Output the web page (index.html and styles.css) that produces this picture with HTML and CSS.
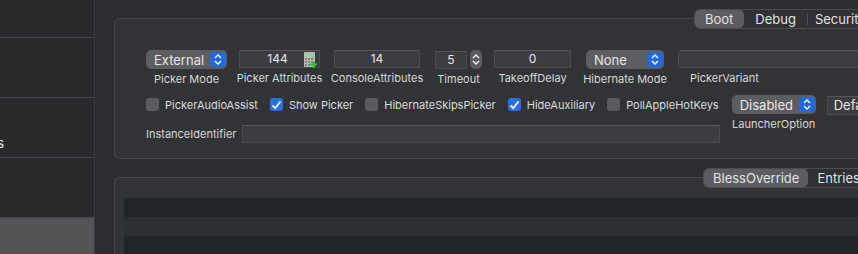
FILE: index.html
```html
<!DOCTYPE html>
<html lang="en">
  <head>
    <title>Misc - Boot</title>
    <link rel="stylesheet" href="styles.css">
  </head>
  <body>
    <div class="sidebar">
      <div class="side-row first"></div>
      <div class="side-row"></div>
      <div class="side-row"><span class="side-label">DeviceProperties</span></div>
      <div class="side-row"></div>
      <div class="side-row selected"></div>
    </div>

    <div class="main">
      <!-- Boot group -->
      <div class="group">
        <div class="tabs tabs-boot">
          <span class="tab active">Boot</span>
          <span class="tab">Debug</span>
          <span class="tab sep">Security</span>
        </div>

        <div class="row1">
          <div class="col w81">
            <div class="popup"><span>External</span><span class="arrows"><svg width="8" height="11" viewBox="0 0 8 11"><path d="M1 4 L4 1 L7 4 M1 7 L4 10 L7 7" fill="none" stroke="#fff" stroke-width="1.4"/></svg></span></div>
            <span class="label">Picker Mode</span>
          </div>
          <div class="col w81 m12">
            <div class="field calc-field">144
              <svg class="calc" width="15" height="18" viewBox="0 0 15 18">
                <rect x="1" y="1" width="11" height="15" rx="1" fill="#b9bcb9"/>
                <rect x="2" y="2" width="9" height="4" fill="#9ccf98"/>
                <g fill="#7f827f">
                  <rect x="2" y="7" width="2" height="2"/><rect x="5" y="7" width="2" height="2"/><rect x="8" y="7" width="2" height="2"/>
                  <rect x="2" y="10" width="2" height="2"/><rect x="5" y="10" width="2" height="2"/><rect x="8" y="10" width="2" height="2"/>
                  <rect x="2" y="13" width="2" height="2"/><rect x="5" y="13" width="2" height="2"/>
                </g>
                <path d="M10.5 10 V17 M7 13.5 H14" stroke="#2ec02e" stroke-width="2.2"/>
              </svg>
            </div>
            <span class="label">Picker Attributes</span>
          </div>
          <div class="col w86 m14">
            <div class="field">14</div>
            <span class="label">ConsoleAttributes</span>
          </div>
          <div class="col w47 m15">
            <div class="timeout">
              <div class="field small">5</div>
              <span class="stepper"><svg width="8" height="13" viewBox="0 0 8 13"><path d="M1 5 L4 2 L7 5 M1 8 L4 11 L7 8" fill="none" stroke="#f0f0f0" stroke-width="1.4"/></svg></span>
            </div>
            <span class="label">Timeout</span>
          </div>
          <div class="col w77 m12">
            <div class="field">0</div>
            <span class="label">TakeoffDelay</span>
          </div>
          <div class="col w78 m15">
            <div class="popup"><span>None</span><span class="arrows"><svg width="8" height="11" viewBox="0 0 8 11"><path d="M1 4 L4 1 L7 4 M1 7 L4 10 L7 7" fill="none" stroke="#fff" stroke-width="1.4"/></svg></span></div>
            <span class="label">Hibernate Mode</span>
          </div>
          <div class="col variant m14">
            <div class="field"></div>
            <span class="label variant-label">PickerVariant</span>
          </div>
        </div>

        <div class="row2">
          <label class="check"><span class="box"></span>PickerAudioAssist</label>
          <label class="check"><span class="box on"><svg width="11" height="10" viewBox="0 0 11 10"><path d="M1.5 5.5 L4.2 8.2 L9.5 1.5" fill="none" stroke="#fff" stroke-width="1.8"/></svg></span>Show Picker</label>
          <label class="check"><span class="box"></span>HibernateSkipsPicker</label>
          <label class="check"><span class="box on"><svg width="11" height="10" viewBox="0 0 11 10"><path d="M1.5 5.5 L4.2 8.2 L9.5 1.5" fill="none" stroke="#fff" stroke-width="1.8"/></svg></span>HideAuxiliary</label>
          <label class="check"><span class="box"></span>PollAppleHotKeys</label>
          <div class="col launcher">
            <div class="popup"><span>Disabled</span><span class="arrows"><svg width="8" height="11" viewBox="0 0 8 11"><path d="M1 4 L4 1 L7 4 M1 7 L4 10 L7 7" fill="none" stroke="#fff" stroke-width="1.4"/></svg></span></div>
            <span class="label">LauncherOption</span>
          </div>
          <div class="field defa">Default</div>
        </div>

        <div class="row3">
          <span class="label">InstanceIdentifier</span>
          <div class="field instance"></div>
        </div>
      </div>

      <!-- BlessOverride / Entries group -->
      <div class="group group2">
        <div class="tabs tabs-bless">
          <span class="tab active">BlessOverride</span>
          <span class="tab">Entries</span>
        </div>
        <div class="table">
          <div class="trow"></div>
          <div class="trow alt"></div>
          <div class="trow"></div>
        </div>
      </div>
    </div>
  </body>
</html>
```

FILE: styles.css
```css
body {
  margin: 0;
  height: 254px;
  overflow: hidden;
  display: flex;
  background-color: #2b2d30;
  font-family: Inter, "Noto Sans", sans-serif;
  color: #dedede;
}

/* sidebar */
.sidebar {
  width: 94px;
  flex-shrink: 0;
  background-color: #29292c;
  border-right: 1px solid #3a3b3e;
  display: flex;
  flex-direction: column;
}
.side-row {
  height: 59px;
  border-bottom: 1px solid #444548;
  display: flex;
  align-items: center;
  overflow: hidden;
}
.side-row.first {
  height: 37px;
}
.side-row.selected {
  flex: 1;
  border-bottom: none;
  background-color: #545456;
}
.side-label {
  flex-shrink: 0;
  width: 200px;
  margin-left: -196px;
  margin-top: 30px;
  text-align: right;
  font-size: 13px;
  color: #e6e6e6;
}

/* main area */
.main {
  flex: 1;
  min-width: 0;
  padding: 18px 0 0 19px;
  overflow: hidden;
}
.group {
  width: 900px;
  background-color: #313336;
  border: 1px solid #46484b;
  border-right: none;
  border-radius: 6px 0 0 6px;
  padding: 0 0 15px 31px;
}
.group2 {
  margin-top: 18px;
  padding: 0 0 0 9px;
  height: 100px;
}

/* segmented tabs */
.tabs {
  display: flex;
  height: 18px;
  margin-top: -10px;
  border: 1px solid #4a4c4f;
  border-radius: 6px;
  background-color: #2f3134;
  width: max-content;
}
.tabs-boot {
  margin-left: 548px;
}
.tabs-bless {
  margin-left: 579px;
}
.tab {
  font-size: 13px;
  line-height: 18px;
  padding: 0 9px;
  color: #e2e2e2;
}
.tab.active {
  background-color: #5b5d60;
  border-radius: 5px;
}
.tabs-boot .tab {
  padding: 0 11px;
}
.tabs-boot .tab.active {
  padding: 0 11px 0 10px;
}
.tab.sep {
  border-left: 1px solid #505255;
  padding-left: 7px;
  margin: 3px 0;
  line-height: 12px;
}

/* first row */
.row1 {
  display: flex;
  margin-top: 21px;
}
.col {
  display: flex;
  flex-direction: column;
  align-items: center;
}
.w81 { width: 81px; }
.w86 { width: 86px; }
.w47 { width: 47px; }
.w77 { width: 77px; }
.w78 { width: 78px; }
.m12 { margin-left: 12px; }
.m14 { margin-left: 14px; }
.m15 { margin-left: 15px; }

.label {
  font-size: 11px;
  line-height: 13px;
  margin-top: 4px;
  white-space: nowrap;
  color: #d8d8d8;
}

.popup {
  box-sizing: border-box;
  width: 100%;
  height: 19px;
  background-color: #5c5d60;
  border-radius: 5px;
  display: flex;
  align-items: center;
  justify-content: space-between;
  padding: 0 1px 0 8px;
  font-size: 13px;
  color: #e6e6e6;
}
.arrows {
  width: 16px;
  height: 15px;
  border-radius: 4px;
  background-color: #2468d9;
  display: flex;
  align-items: center;
  justify-content: center;
}

.field {
  box-sizing: border-box;
  width: 100%;
  height: 18px;
  background-color: #3b3d40;
  border: 1px solid #4b4d50;
  border-top-color: #55575a;
  font-size: 12px;
  line-height: 16px;
  text-align: center;
  color: #e6e6e6;
}
.calc-field {
  position: relative;
  padding-right: 4px;
}
.calc {
  position: absolute;
  right: 1px;
  top: 0;
}

.timeout {
  display: flex;
  width: 100%;
  align-items: center;
  gap: 3px;
}
.field.small {
  width: 32px;
}
.stepper {
  width: 12px;
  height: 19px;
  border-radius: 5px;
  background-color: #5c5d60;
  display: flex;
  align-items: center;
  justify-content: center;
}

.variant {
  width: 200px;
  align-items: flex-start;
}
.variant .field {
  border-radius: 4px;
}
.variant-label {
  margin-left: 12px;
}

/* second row */
.row2 {
  display: flex;
  align-items: flex-start;
  margin-top: 9px;
}
.check {
  display: flex;
  align-items: center;
  height: 19px;
  font-size: 11px;
  color: #dcdcdc;
  margin-right: 12px;
}
.box {
  width: 13px;
  height: 13px;
  border-radius: 3px;
  background-color: #5a5b5e;
  margin-right: 6px;
  display: flex;
  align-items: center;
  justify-content: center;
}
.box.on {
  background-color: #2a6fe0;
}
.launcher {
  width: 84px;
  margin-left: 1px;
  margin-bottom: -6px;
}
.field.defa {
  width: 80px;
  height: 19px;
  margin-left: 11px;
  margin-top: 1px;
  text-align: left;
  padding-left: 6px;
  font-size: 13px;
}

/* third row */
.row3 {
  display: flex;
  align-items: center;
  margin-top: 0;
  height: 18px;
}
.row3 .label {
  margin: 0 6px 0 0;
}
.field.instance {
  width: 478px;
}

/* table */
.table {
  margin-top: 10px;
}
.trow {
  height: 19px;
  background-color: #222527;
}
.trow.alt {
  background-color: #2d3033;
}
```
